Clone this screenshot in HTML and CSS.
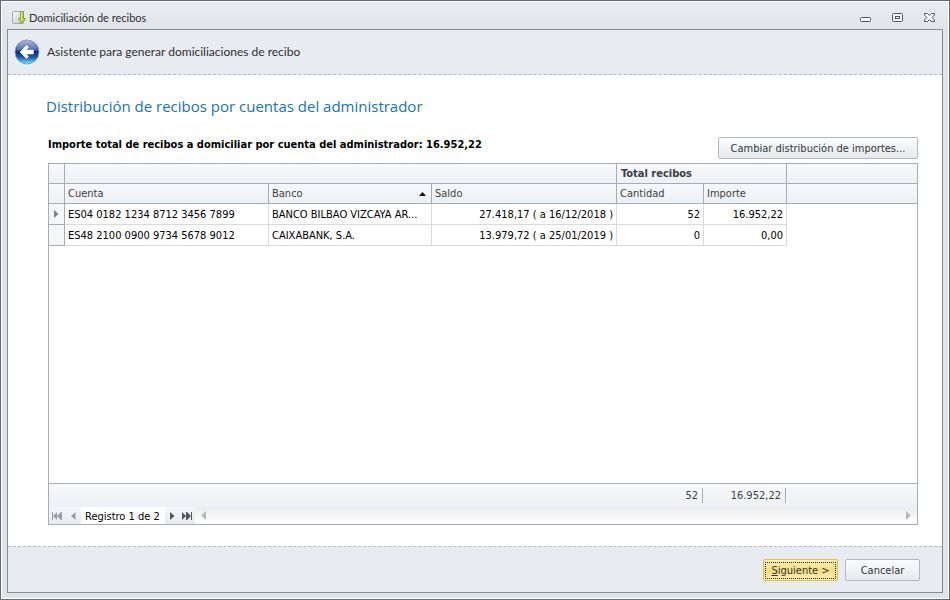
FILE: index.html
```html
<!DOCTYPE html>
<html lang="es">
<head>
  <meta charset="UTF-8" />
  <title>Domiciliación de recibos</title>
  <meta name="viewport" content="width=device-width, initial-scale=1.0" />
  <link rel="stylesheet" href="styles.css">
</head>
<body>
  <div class="window">

    <!-- Title bar -->
    <div class="title-bar">
      <svg class="app-icon" width="14" height="14" viewBox="0 0 14 14">
        <defs>
          <linearGradient id="sheet" x1="0" y1="0" x2="1" y2="1">
            <stop offset="0" stop-color="#fafafa" />
            <stop offset="1" stop-color="#c4c4c4" />
          </linearGradient>
        </defs>
        <rect x="0.5" y="0.5" width="11" height="12" rx="1" fill="url(#sheet)" stroke="#a9a9a9" />
        <path d="M8.5 .5h3v7h2.2L10 13 6.500 7.500h2z" fill="#b5d334" stroke="#7da01c" stroke-width=".8" />
        <path d="M9.500 1.500v7.500" stroke="#e4f08a" />
      </svg>
      <span class="title">Domiciliación de recibos</span>
      <div class="window-buttons">
        <button type="button" aria-label="Minimizar">
          <svg width="11" height="12" viewBox="0 0 11 12"><rect x="0.5" y="5.500" width="10" height="4" rx="1" fill="#fff" stroke="#50565e" /></svg>
        </button>
        <button type="button" aria-label="Maximizar">
          <svg width="11" height="12" viewBox="0 0 11 12"><rect x="0.5" y="1.500" width="10" height="8" rx="1" fill="#f6f7f8" stroke="#50565e" /><rect x="3.500" y="4.500" width="4" height="2" fill="#fff" stroke="#50565e" /></svg>
        </button>
        <button type="button" aria-label="Cerrar">
          <svg width="11" height="12" viewBox="0 0 11 12"><path d="M.5 1.500h3l2 2 2-2h3v1.500L8 5.500 10.500 8v1.500h-3l-2-2-2 2h-3V8L3 5.500.5 3z" fill="#fff" stroke="#50565e" /></svg>
        </button>
      </div>
    </div>

    <div class="wizard">

      <!-- Wizard header -->
      <div class="wizard-header">
        <button type="button" class="back" aria-label="Atrás">
          <svg width="26" height="26" viewBox="0 0 26 26">
            <defs>
              <linearGradient id="ball" x1="0" y1="0" x2="0" y2="1">
                <stop offset="0" stop-color="#8fa3cc" />
                <stop offset=".3" stop-color="#4763a8" />
                <stop offset=".5" stop-color="#0e2a78" />
                <stop offset=".72" stop-color="#1b5cae" />
                <stop offset="1" stop-color="#6cf0ff" />
              </linearGradient>
            </defs>
            <circle cx="13" cy="13" r="12" fill="url(#ball)" stroke="#8a9cbb" />
            <path d="M2.500 12a10.500 10.500 0 0 1 21 0Q13 8 2.500 12z" fill="#fff" opacity=".22" />
            <path d="M6 13l6.500-6.500 2 2-2.200 2.500h7v4h-7l2.200 2.500-2 2z" fill="#fff" stroke="#fff" stroke-width=".6" stroke-linejoin="round" />
          </svg>
        </button>
        <span>Asistente para generar domiciliaciones de recibo</span>
      </div>

      <!-- Page -->
      <div class="page">
        <h1>Distribución de recibos por cuentas del administrador</h1>
        <div class="toolbar">
          <strong>Importe total de recibos a domiciliar por cuenta del administrador: 16.952,22</strong>
          <button type="button" class="btn btn-wide">Cambiar distribución de importes...</button>
        </div>

        <div class="grid">
          <table>
            <colgroup>
              <col class="col-mark"><col class="col-cuenta"><col class="col-banco"><col class="col-saldo"><col class="col-cantidad"><col class="col-importe"><col>
            </colgroup>
            <thead>
              <tr>
                <th></th>
                <th colspan="3"></th>
                <th colspan="2" class="band">Total recibos</th>
                <th></th>
              </tr>
              <tr>
                <th></th>
                <th>Cuenta</th>
                <th><div class="sorted">Banco<svg width="7" height="4" viewBox="0 0 7 4"><path d="M0 4l3.500-4L7 4z" fill="#111" /></svg></div></th>
                <th>Saldo</th>
                <th>Cantidad</th>
                <th>Importe</th>
                <th></th>
              </tr>
            </thead>
            <tbody>
              <tr>
                <td class="mark"><svg width="5" height="8" viewBox="0 0 5 8"><path d="M0 0l4.500 4L0 8z" fill="#7d818a" /></svg></td>
                <td>ES04 0182 1234 8712 3456 7899</td>
                <td>BANCO BILBAO VIZCAYA AR...</td>
                <td class="num">27.418,17 ( a 16/12/2018 )</td>
                <td class="num">52</td>
                <td class="num">16.952,22</td>
                <td class="rest"></td>
              </tr>
              <tr>
                <td class="mark"></td>
                <td>ES48 2100 0900 9734 5678 9012</td>
                <td>CAIXABANK, S.A.</td>
                <td class="num">13.979,72 ( a 25/01/2019 )</td>
                <td class="num">0</td>
                <td class="num">0,00</td>
                <td class="rest"></td>
              </tr>
            </tbody>
          </table>

          <div class="summary">
            <span class="total total-cantidad">52</span>
            <span class="total total-importe">16.952,22</span>
          </div>

          <div class="navigator">
            <button type="button" aria-label="Primero" disabled><svg width="10" height="8" viewBox="0 0 10 8"><path d="M0 0h1v8H0zM5 0v8L1 4zM9 0v8L5 4zM9 0h1v8H9z" fill="currentColor" /></svg></button>
            <button type="button" aria-label="Anterior" disabled><svg width="5" height="8" viewBox="0 0 5 8"><path d="M4.500 0v8L0 4z" fill="currentColor" /></svg></button>
            <span class="record">Registro 1 de 2</span>
            <button type="button" aria-label="Siguiente"><svg width="5" height="8" viewBox="0 0 5 8"><path d="M0 0l4.500 4L0 8z" fill="currentColor" /></svg></button>
            <button type="button" aria-label="Último"><svg width="10" height="8" viewBox="0 0 10 8"><path d="M0 0l4 4-4 4zM4 0h1v8H4zM5 0l4 4-4 4zM9 0h1v8H9z" fill="currentColor" /></svg></button>
            <div class="scrollbar">
              <svg width="5" height="9" viewBox="0 0 5 9"><path d="M5 0v9L0 4.500z" fill="#bcbcbc" /></svg>
              <svg width="5" height="9" viewBox="0 0 5 9"><path d="M0 0l5 4.500L0 9z" fill="#bcbcbc" /></svg>
            </div>
          </div>
        </div>
      </div>

      <!-- Wizard footer -->
      <div class="wizard-footer">
        <button type="button" class="btn btn-next"><span><u>S</u>iguiente &gt;</span></button>
        <button type="button" class="btn">Cancelar</button>
      </div>
    </div>
  </div>
</body>
</html>
```

FILE: styles.css
```css
* {
  box-sizing: border-box;
}

body {
  margin: 0;
  font-family: Tahoma, "DejaVu Sans Condensed", "DejaVu Sans", sans-serif;
  font-size: 11px;
  line-height: 14px;
  color: #000;
}

button {
  font: inherit;
  color: inherit;
}

svg {
  display: block;
}

.window {
  display: flex;
  flex-direction: column;
  min-height: 100vh;
  padding: 0 6px 6px;
  border: 1px solid #646a76;
  box-shadow: inset 0 0 0 1px #fbfcfc;
  background: linear-gradient(#ececf1, #e0e4e7 29px);
}

.title-bar {
  display: flex;
  align-items: center;
  height: 28px;
  padding: 6px 8px 0 5px;
  gap: 3px;
}

.title,
.wizard-header {
  font-family: "Segoe UI", Lato, sans-serif;
  color: #303030;
}

.title {
  flex: 1;
}

.window-buttons {
  display: flex;
  gap: 21px;
}

.window-buttons button,
.back {
  padding: 0;
  border: 0;
  background: none;
}

.wizard {
  flex: 1;
  display: flex;
  flex-direction: column;
  border: 1px solid #868c94;
  background: #fff;
}

.wizard-header {
  display: flex;
  align-items: center;
  gap: 7px;
  height: 45px;
  padding: 0 6px;
  border-bottom: 1px dashed #b4b9cb;
  background: #e8ebf0;
  font-size: 12px;
}

.page {
  flex: 1;
  display: flex;
  flex-direction: column;
  padding: 20px 24px 21px 38px;
}

h1 {
  margin: 0;
  font-family: "Segoe UI", "Open Sans", sans-serif;
  font-size: 15px;
  line-height: 22px;
  font-weight: normal;
  color: #1873b4;
}

.toolbar,
.grid {
  margin-left: 2px;
}

.toolbar {
  display: flex;
  align-items: flex-start;
  justify-content: space-between;
  padding: 20px 0 4px;
}

.toolbar strong {
  padding-top: 1px;
}

.btn {
  height: 22px;
  min-width: 75px;
  padding: 1px 8px 0;
  border: 1px solid #b4b8bd;
  border-radius: 2px;
  background: linear-gradient(#fafbfc, #e6eaee);
  color: #32363c;
}

.btn-wide {
  min-width: 200px;
}

.btn-next {
  padding: 1px;
  border-color: #e5c042;
  background: linear-gradient(#fdf0b8, #f8dd80 50%, #fcedb0);
}

.btn-next span {
  display: block;
  padding-top: 1px;
  border: 1px dotted #222;
}

.grid {
  flex: 1;
  display: flex;
  flex-direction: column;
  border: 1px solid #a5abb9;
}

table {
  width: 100%;
  table-layout: fixed;
  border-spacing: 0;
}

.col-mark { width: 16px; }
.col-cuenta { width: 204px; }
.col-banco { width: 163px; }
.col-saldo { width: 185px; }
.col-cantidad { width: 87px; }
.col-importe { width: 83px; }

th {
  height: 20px;
  padding: 0 3px;
  border-right: 1px solid #a5abb9;
  border-bottom: 1px solid #a5abb9;
  background: linear-gradient(#f7f9fb, #edf0f4);
  color: #3b3e44;
  font-weight: normal;
  text-align: left;
}

th:last-child {
  border-right: 0;
}

.band {
  padding-left: 4px;
  font-weight: bold;
}

.sorted {
  display: flex;
  align-items: center;
  justify-content: space-between;
  padding-right: 2px;
}

td {
  height: 21px;
  padding: 2px 3px 0;
  border-right: 1px solid #d8dade;
  border-bottom: 1px solid #d8dade;
  white-space: nowrap;
}

.num {
  text-align: right;
}

.mark {
  padding: 0 5px;
  border-color: #a5abb9;
  background: #f4f6f9;
}

.rest {
  border: 0;
}

.summary {
  display: flex;
  align-items: center;
  height: 24px;
  margin-top: auto;
  border-top: 1px solid #a5abb9;
  background: linear-gradient(#f7f9fb, #edf0f4);
  color: #3b3e44;
}

.total {
  padding: 1px 4px 0 0;
  border-right: 1px solid #a5abb9;
  text-align: right;
}

.total-cantidad {
  width: 654px;
}

.total-importe {
  width: 83px;
}

.navigator {
  display: flex;
  height: 17px;
}

.navigator button {
  display: flex;
  align-items: center;
  justify-content: center;
  width: 15px;
  padding: 0;
  border: 0;
  background: linear-gradient(#f4f6f9, #e6ebef);
  color: #50565e;
}

.navigator button:disabled {
  width: 16px;
  color: #999ca1;
}

.record {
  padding: 3px 5px 0 4px;
}

.scrollbar {
  flex: 1;
  display: flex;
  align-items: center;
  justify-content: space-between;
  padding: 0 6px;
  background: linear-gradient(#ececec, #fff);
}

.wizard-footer {
  display: flex;
  justify-content: flex-end;
  gap: 7px;
  padding: 12px 22px 11px;
  border-top: 1px dashed #b8bbc0;
  background: #e8ebf0;
}
```
